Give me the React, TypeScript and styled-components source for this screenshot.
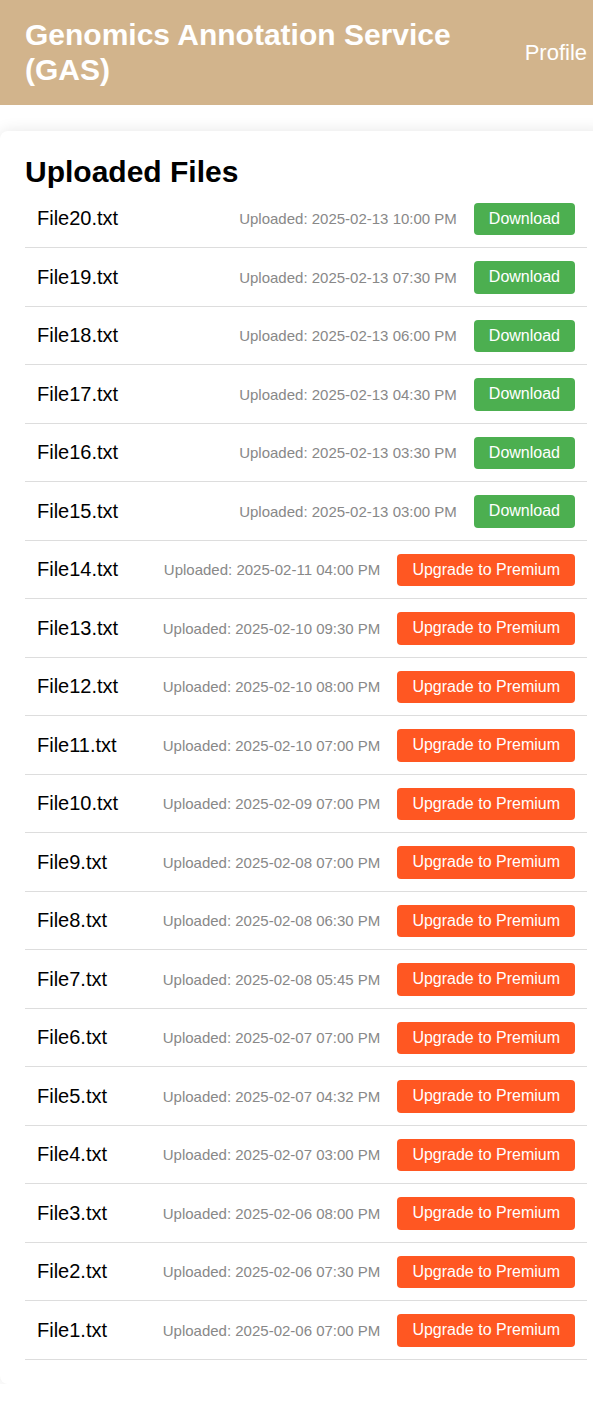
import React from "react";
import styled, { createGlobalStyle } from "styled-components";

const GlobalStyle = createGlobalStyle`
  html, body {
    margin: 0;
    padding: 0;
    overflow-x: hidden;
    background: #ffffff;
    font-family: "Liberation Sans", Arial, sans-serif;
  }
  * { box-sizing: border-box; }
`;

const Header = styled.header`
  display: flex;
  justify-content: space-between;
  align-items: center;
  background: #d2b48c;
  padding: 18px 6px 18px 25px;
  color: #ffffff;
`;

const Title = styled.h1`
  margin: 0;
  font-size: 30px;
  line-height: 34.5px;
  font-weight: bold;
`;

const ProfileLink = styled.a`
  color: #ffffff;
  font-size: 22px;
  text-decoration: none;
  white-space: nowrap;
  flex-shrink: 0;
`;

const Card = styled.main`
  margin: 26px -19px 0 0;
  padding: 24px 25px 24px 25px;
  background: #ffffff;
  border-radius: 8px;
  box-shadow: 0 0 15px rgba(0, 0, 0, 0.1);
`;

const Heading = styled.h2`
  margin: 0;
  font-size: 30px;
  line-height: 34.5px;
  font-weight: bold;
  color: #000;
`;

const List = styled.ul`
  list-style: none;
  margin: 0;
  padding: 0;
`;

const Row = styled.li`
  display: flex;
  justify-content: space-between;
  align-items: center;
  padding: 13px 12px 12px 12px;
  border-bottom: 1px solid #dddddd;
`;

const FileName = styled.span`
  font-size: 20px;
  color: #000;
`;

const RightGroup = styled.div`
  display: flex;
  align-items: center;
`;

const DateText = styled.span`
  font-size: 15px;
  color: #888888;
  margin-right: 17px;
`;

const ActionButton = styled.button<{ $premium?: boolean }>`
  border: none;
  border-radius: 4px;
  padding: 7px 15px;
  font-family: "Liberation Sans", Arial, sans-serif;
  font-size: 16px;
  line-height: 18.5px;
  color: #ffffff;
  background: ${(p) => (p.$premium ? "#ff5722" : "#4caf50")};
  cursor: pointer;
`;

const files: { name: string; date: string; premium: boolean }[] = [
  { name: "File20.txt", date: "2025-02-13 10:00 PM", premium: false },
  { name: "File19.txt", date: "2025-02-13 07:30 PM", premium: false },
  { name: "File18.txt", date: "2025-02-13 06:00 PM", premium: false },
  { name: "File17.txt", date: "2025-02-13 04:30 PM", premium: false },
  { name: "File16.txt", date: "2025-02-13 03:30 PM", premium: false },
  { name: "File15.txt", date: "2025-02-13 03:00 PM", premium: false },
  { name: "File14.txt", date: "2025-02-11 04:00 PM", premium: true },
  { name: "File13.txt", date: "2025-02-10 09:30 PM", premium: true },
  { name: "File12.txt", date: "2025-02-10 08:00 PM", premium: true },
  { name: "File11.txt", date: "2025-02-10 07:00 PM", premium: true },
  { name: "File10.txt", date: "2025-02-09 07:00 PM", premium: true },
  { name: "File9.txt", date: "2025-02-08 07:00 PM", premium: true },
  { name: "File8.txt", date: "2025-02-08 06:30 PM", premium: true },
  { name: "File7.txt", date: "2025-02-08 05:45 PM", premium: true },
  { name: "File6.txt", date: "2025-02-07 07:00 PM", premium: true },
  { name: "File5.txt", date: "2025-02-07 04:32 PM", premium: true },
  { name: "File4.txt", date: "2025-02-07 03:00 PM", premium: true },
  { name: "File3.txt", date: "2025-02-06 08:00 PM", premium: true },
  { name: "File2.txt", date: "2025-02-06 07:30 PM", premium: true },
  { name: "File1.txt", date: "2025-02-06 07:00 PM", premium: true },
];

export default function App() {
  return (
    <>
      <GlobalStyle />
      <Header>
        <Title>Genomics Annotation Service (GAS)</Title>
        <ProfileLink href="#">Profile</ProfileLink>
      </Header>
      <Card>
        <Heading>Uploaded Files</Heading>
        <List>
          {files.map((f) => (
            <Row key={f.name}>
              <FileName>{f.name}</FileName>
              <RightGroup>
                <DateText>Uploaded: {f.date}</DateText>
                <ActionButton $premium={f.premium}>
                  {f.premium ? "Upgrade to Premium" : "Download"}
                </ActionButton>
              </RightGroup>
            </Row>
          ))}
        </List>
      </Card>
    </>
  );
}
